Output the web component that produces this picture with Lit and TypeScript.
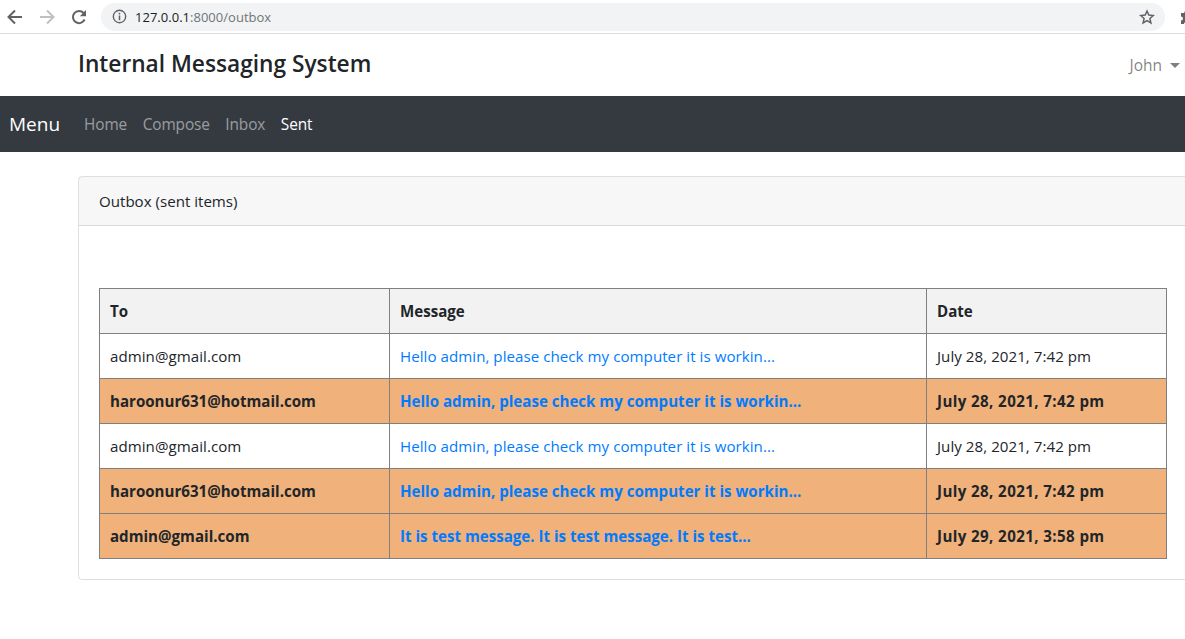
import { LitElement, css, html } from "lit";

interface Row {
  to: string;
  message: string;
  date: string;
  unread: boolean;
}

const ROWS: Row[] = [
  { to: "admin@gmail.com", message: "Hello admin, please check my computer it is workin...", date: "July 28, 2021, 7:42 pm", unread: false },
  { to: "haroonur631@hotmail.com", message: "Hello admin, please check my computer it is workin...", date: "July 28, 2021, 7:42 pm", unread: true },
  { to: "admin@gmail.com", message: "Hello admin, please check my computer it is workin...", date: "July 28, 2021, 7:42 pm", unread: false },
  { to: "haroonur631@hotmail.com", message: "Hello admin, please check my computer it is workin...", date: "July 28, 2021, 7:42 pm", unread: true },
  { to: "admin@gmail.com", message: "It is test message. It is test message. It is test...", date: "July 29, 2021, 3:58 pm", unread: true },
];

export class AppRoot extends LitElement {
  static styles = css`
    :host {
      display: block;
      width: 1185px;
      height: 639px;
      overflow: hidden;
      background: #fff;
      color: #212529;
      font-family: "Open Sans", "Noto Sans", sans-serif;
      font-size: 16px;
    }

    .chrome {
      display: flex;
      align-items: center;
      height: 33px;
      border-bottom: 1px solid #dadce0;
      box-sizing: content-box;
    }
    .chrome-btn {
      display: block;
      flex: none;
      width: 16px;
      height: 16px;
    }
    .back { margin-left: 7px; }
    .forward { margin-left: 16px; }
    .reload { margin-left: 16px; }
    .omnibox {
      flex: none;
      display: flex;
      align-items: center;
      width: 1064px;
      height: 28px;
      margin-left: 14px;
      border-radius: 14px;
      background: #f1f3f4;
    }
    .info { margin-left: 11px; width: 15px; height: 15px; }
    .url {
      margin-left: 8px;
      font-size: 13px;
      color: #70757a;
      letter-spacing: 0.02px;
    }
    .url b { font-weight: 400; color: #202124; }
    .star { margin-left: auto; margin-right: 10px; }
    .puzzle { margin-left: 15px; flex: none; width: 16px; height: 16px; }

    .brand {
      display: flex;
      align-items: center;
      justify-content: space-between;
      height: 62px;
      padding-left: 78px;
    }
    .brand h1 {
      margin: 0 0 3px;
      font-size: 22.7px;
      font-weight: 600;
    }
    .user {
      display: flex;
      align-items: center;
      gap: 8px;
      margin-right: 5px;
      color: rgba(0, 0, 0, 0.5);
      font-size: 15.5px;
    }
    .caret {
      width: 0;
      height: 0;
      border-top: 5px solid rgba(0, 0, 0, 0.5);
      border-left: 5px solid transparent;
      border-right: 5px solid transparent;
    }

    nav {
      display: flex;
      align-items: center;
      height: 56px;
      padding-left: 9px;
      background: #343a40;
    }
    .menu {
      margin-right: 24px;
      color: #fff;
      font-size: 19px;
    }
    nav a {
      margin-right: 15.5px;
      color: rgba(255, 255, 255, 0.5);
      font-size: 15.4px;
      letter-spacing: -0.1px;
      text-decoration: none;
    }
    nav a.active { color: #fff; }

    .card {
      box-sizing: border-box;
      width: 1130px;
      margin: 24px 0 0 78px;
      border: 1px solid rgba(0, 0, 0, 0.125);
      border-radius: 4px;
    }
    .card-header {
      height: 48px;
      padding-left: 20px;
      line-height: 48px;
      font-size: 15.1px;
      background: rgba(0, 0, 0, 0.03);
      border-bottom: 1px solid rgba(0, 0, 0, 0.125);
    }
    .card-body { padding: 62px 0 20px 20px; }

    table {
      width: 1068px;
      table-layout: fixed;
      border-collapse: collapse;
      font-size: 15.1px;
    }
    th, td {
      height: 45px;
      box-sizing: border-box;
      padding: 0 10px;
      border: 1px solid #808080;
      text-align: left;
      white-space: nowrap;
      overflow: hidden;
    }
    td { letter-spacing: 0.05px; }
    th { background: #f2f2f2; font-weight: 700; }
    tr.unread td { background: #f0b27a; font-weight: 700; letter-spacing: 0; }
    tr.unread td.date { letter-spacing: 0.4px; }
    td a { color: #007bff; text-decoration: none; }
    .col-to { width: 290px; }
    .col-msg { width: 537px; }
  `;

  render() {
    return html`
      <div class="chrome">
        <svg class="chrome-btn back" viewBox="0 0 16 16" fill="none" stroke="#5f6368" stroke-width="2">
          <path d="M15 8H2M8 1.5 1.5 8 8 14.5" />
        </svg>
        <svg class="chrome-btn forward" viewBox="0 0 16 16" fill="none" stroke="#bdc1c6" stroke-width="2">
          <path d="M1 8h13M8 1.5 14.5 8 8 14.5" />
        </svg>
        <svg class="chrome-btn reload" viewBox="0 0 16 16" fill="none">
          <path d="M13.6 10.5A6.1 6.1 0 1 1 12.6 4" stroke="#5f6368" stroke-width="2" />
          <path d="M15 1v6.2H8.8z" fill="#5f6368" />
        </svg>
        <div class="omnibox">
          <svg class="chrome-btn info" viewBox="0 0 16 16" fill="none" stroke="#5f6368">
            <circle cx="8" cy="8" r="6.6" stroke-width="1.5" />
            <path d="M8 7v5M8 4v1.8" stroke-width="1.6" />
          </svg>
          <span class="url"><b>127.0.0.1</b>:8000/outbox</span>
          <svg class="chrome-btn star" viewBox="0 0 16 16" fill="none" stroke="#5f6368" stroke-width="1.5">
            <path d="M8 2l1.8 4.1 4.5.4-3.4 3 1 4.4L8 11.6l-3.9 2.3 1-4.4-3.4-3 4.5-.4z" />
          </svg>
        </div>
        <svg class="puzzle" viewBox="0 0 16 16" fill="#5f6368">
          <path d="M1 4h3.2a2 2 0 1 1 4 0H11v3a2 2 0 1 1 0 4v4H8a2 2 0 1 0-4 0H1v-3.5a2 2 0 1 0 0-4z" />
        </svg>
      </div>

      <header class="brand">
        <h1>Internal Messaging System</h1>
        <div class="user">John <span class="caret"></span></div>
      </header>

      <nav>
        <span class="menu">Menu</span>
        <a href="#">Home</a>
        <a href="#">Compose</a>
        <a href="#">Inbox</a>
        <a href="#" class="active">Sent</a>
      </nav>

      <section class="card">
        <div class="card-header">Outbox (sent items)</div>
        <div class="card-body">
          <table>
            <colgroup>
              <col class="col-to" />
              <col class="col-msg" />
              <col />
            </colgroup>
            <thead>
              <tr><th>To</th><th>Message</th><th>Date</th></tr>
            </thead>
            <tbody>
              ${ROWS.map(
                (r) => html`
                  <tr class=${r.unread ? "unread" : ""}>
                    <td>${r.to}</td>
                    <td><a href="#">${r.message}</a></td>
                    <td class="date">${r.date}</td>
                  </tr>
                `
              )}
            </tbody>
          </table>
        </div>
      </section>
    `;
  }
}

customElements.define("app-root", AppRoot);
